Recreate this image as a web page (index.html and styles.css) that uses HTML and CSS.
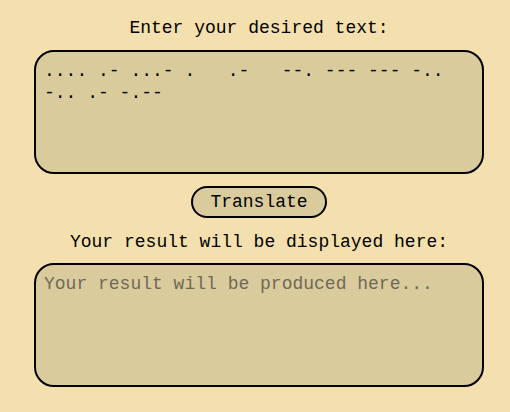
FILE: index.html
```html
<!DOCTYPE html>
<html>
<head>
<meta charset="utf-8">
<link rel="stylesheet" href="styles.css">
</head>
<body>
<main class="app">
  <label class="label label-top" for="src">Enter your desired text:</label>
  <textarea id="src" class="box">.... .- ...- .   .-   --. --- --- -.. -.. .- -.--</textarea>
  <button class="btn" type="button">Translate</button>
  <label class="label label-out" for="out">Your result will be displayed here:</label>
  <textarea id="out" class="box" readonly placeholder="Your result will be produced here..."></textarea>
</main>
</body>
</html>
```

FILE: styles.css
```css
html, body {
  margin: 0;
  padding: 0;
  background: #f4e0ae;
}
body {
  width: 510px;
  height: 412px;
  font-family: "Liberation Mono", monospace;
  color: #000;
}
.app {
  display: flex;
  flex-direction: column;
  align-items: center;
  padding-top: 18px;
  padding-left: 8px;
}
.label {
  font-size: 18px;
  line-height: 21px;
  display: block;
}
.label-top {
  margin-bottom: 11px;
}
.label-out {
  margin-bottom: 10px;
}
.box {
  box-sizing: border-box;
  width: 450px;
  height: 124px;
  margin: 0;
  padding: 8px;
  border: 2px solid #000;
  border-radius: 20px;
  background: #dacb9c;
  font-family: "Liberation Mono", monospace;
  font-size: 18px;
  line-height: 22px;
  color: #000;
  resize: none;
  outline: none;
  overflow: hidden;
}
.box::placeholder {
  color: #6f6958;
  opacity: 1;
}
.btn {
  box-sizing: border-box;
  margin: 12px 0 14px;
  width: 136px;
  height: 32px;
  padding: 0;
  border: 2px solid #000;
  border-radius: 16px;
  background: #dacb9c;
  font-family: "Liberation Mono", monospace;
  font-size: 18px;
  color: #000;
}
```
